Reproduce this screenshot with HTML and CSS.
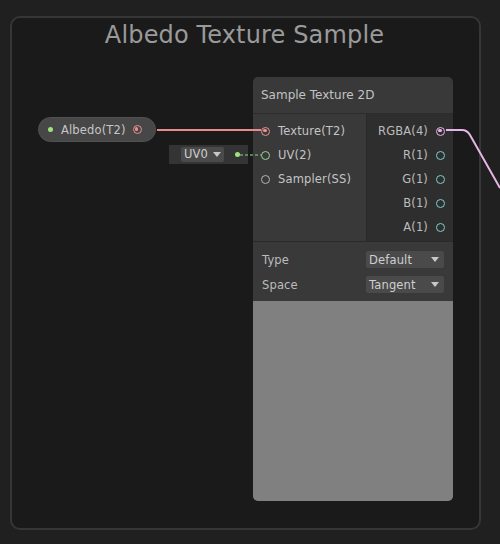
FILE: index.html
```html
<!DOCTYPE html>
<html>
<head>
<meta charset="utf-8">
<link rel="stylesheet" href="styles.css">
</head>
<body>
<div class="canvas">
  <div class="group">
    <div class="group-title">Albedo Texture Sample</div>
  </div>

  <div class="prop-node">
    <span class="dot green"></span>
    <span class="prop-label">Albedo(T2)</span>
    <span class="port red filled"></span>
  </div>

  <div class="uv-node">
    <div class="mini-drop">UV0 <span class="arrow"></span></div>
    <span class="dot green"></span>
  </div>

  <div class="node">
    <div class="node-header">Sample Texture 2D</div>
    <div class="ports">
      <div class="inputs">
        <div class="in-row"><span class="port red filled"></span><span>Texture(T2)</span></div>
        <div class="in-row"><span class="port green"></span><span>UV(2)</span></div>
        <div class="in-row"><span class="port grey"></span><span>Sampler(SS)</span></div>
      </div>
      <div class="outputs">
        <div class="out-row"><span>RGBA(4)</span><span class="port pink filled"></span></div>
        <div class="out-row"><span>R(1)</span><span class="port teal"></span></div>
        <div class="out-row"><span>G(1)</span><span class="port teal"></span></div>
        <div class="out-row"><span>B(1)</span><span class="port teal"></span></div>
        <div class="out-row"><span>A(1)</span><span class="port teal"></span></div>
      </div>
    </div>
    <div class="settings">
      <div class="set-row"><span>Type</span><div class="drop">Default<span class="arrow"></span></div></div>
      <div class="set-row"><span>Space</span><div class="drop">Tangent<span class="arrow"></span></div></div>
    </div>
    <div class="preview"></div>
  </div>

  <svg class="edges" width="500" height="544" viewBox="0 0 500 544">
    <line x1="157" y1="130" x2="261" y2="130" stroke="#e68c8c" stroke-width="2"/>
    <line x1="240" y1="155" x2="261" y2="155" stroke="#6fa46f" stroke-width="1.5" stroke-dasharray="3 2"/>
    <path d="M446 130 L462 130 Q467 130 470 135 L500 188" fill="none" stroke="#e6b4e6" stroke-width="2"/>
  </svg>
</div>
</body>
</html>
```
FILE: styles.css
```css
* { box-sizing: border-box; }
html, body { margin: 0; padding: 0; }
body {
  background: #202020;
  font-family: "DejaVu Sans", Verdana, sans-serif;
  color: #c4c4c4;
  font-size: 11.5px;
  letter-spacing: 0.15px;
}
.canvas {
  position: relative;
  width: 500px;
  height: 544px;
  padding: 16px 19px 14px 10px;
}
.group {
  width: 471px;
  height: 514px;
  border: 2px solid #363636;
  border-radius: 10px;
  background: #1a1a1a;
  padding-top: 3px;
}
.group-title {
  text-align: center;
  font-size: 24px;
  letter-spacing: 0.15px;
  line-height: 28px;
  color: #9a9a9a;
  padding-right: 2px;
}
.edges {
  position: absolute;
  left: 0;
  top: 0;
  pointer-events: none;
}
.port {
  display: inline-block;
  width: 9px;
  height: 9px;
  border-radius: 50%;
  border: 1.5px solid #aaa;
  position: relative;
  flex: none;
}
.port.filled::after {
  content: "";
  position: absolute;
  left: 1.25px;
  top: 1.25px;
  width: 3.5px;
  height: 3.5px;
  border-radius: 50%;
  background: currentColor;
}
.port.red { border-color: #e88f8f; color: #e88f8f; }
.port.green { border-color: #98d498; }
.port.grey { border-color: #b4b4b4; }
.port.pink { border-color: #e6b4e6; color: #e6b4e6; }
.port.teal { border-color: #7fcfcf; }
.dot {
  display: inline-block;
  width: 5px;
  height: 5px;
  border-radius: 50%;
  flex: none;
}
.dot.green { background: #9ee27c; }

.prop-node {
  position: absolute;
  left: 38px;
  top: 117px;
  width: 118px;
  height: 25px;
  border-radius: 13px;
  background: #474747;
  border: 1px solid #515151;
  display: flex;
  align-items: center;
  padding-left: 9px;
}
.prop-label { margin-left: 8px; color: #c6c6c6; }
.prop-node .port { margin-left: 7px; }

.uv-node {
  position: absolute;
  left: 169px;
  top: 145px;
  width: 79px;
  height: 19px;
  background: #343434;
  display: flex;
  align-items: center;
  padding-left: 12px;
}
.mini-drop {
  width: 43px;
  height: 15px;
  background: #4a4a4a;
  border-radius: 2px;
  line-height: 15px;
  padding-left: 3px;
  color: #cfcfcf;
  display: flex;
  align-items: center;
  gap: 5px;
}
.uv-node .dot { margin-left: 11px; }
.arrow {
  display: inline-block;
  width: 0;
  height: 0;
  border-left: 4px solid transparent;
  border-right: 4px solid transparent;
  border-top: 5px solid #c8c8c8;
}

.node {
  position: absolute;
  left: 253px;
  top: 77px;
  width: 200px;
  height: 424px;
  border-radius: 5px;
  overflow: hidden;
  background: #393939;
  display: flex;
  flex-direction: column;
}
.node-header {
  height: 37px;
  line-height: 36px;
  padding-left: 8px;
  font-size: 12px;
  letter-spacing: 0;
  color: #c2c2c2;
  border-bottom: 1px solid #2c2c2c;
}
.ports {
  display: flex;
  height: 127px;
}
.inputs {
  width: 113px;
  background: #393939;
  padding-top: 5px;
}
.outputs {
  flex: 1;
  background: #2e2e2e;
  border-left: 1px solid #292929;
  padding-top: 5px;
}
.in-row, .out-row {
  height: 24px;
  display: flex;
  align-items: center;
  gap: 8px;
}
.in-row { padding-left: 8px; }
.out-row { justify-content: flex-end; padding-right: 8px; color: #bdbdbd; }
.settings {
  border-top: 1px solid #2a2a2a;
  padding: 9px 9px 8px;
  display: flex;
  flex-direction: column;
  gap: 8px;
  height: 60px;
}
.set-row {
  display: flex;
  justify-content: space-between;
  align-items: center;
  height: 17px;
  color: #bcbcbc;
}
.drop {
  width: 78px;
  height: 17px;
  background: #4a4a4a;
  border-radius: 2px;
  display: flex;
  align-items: center;
  justify-content: space-between;
  padding: 0 5px 0 3px;
  color: #cfcfcf;
}
.preview {
  flex: 1;
  background: #808080;
}
```
